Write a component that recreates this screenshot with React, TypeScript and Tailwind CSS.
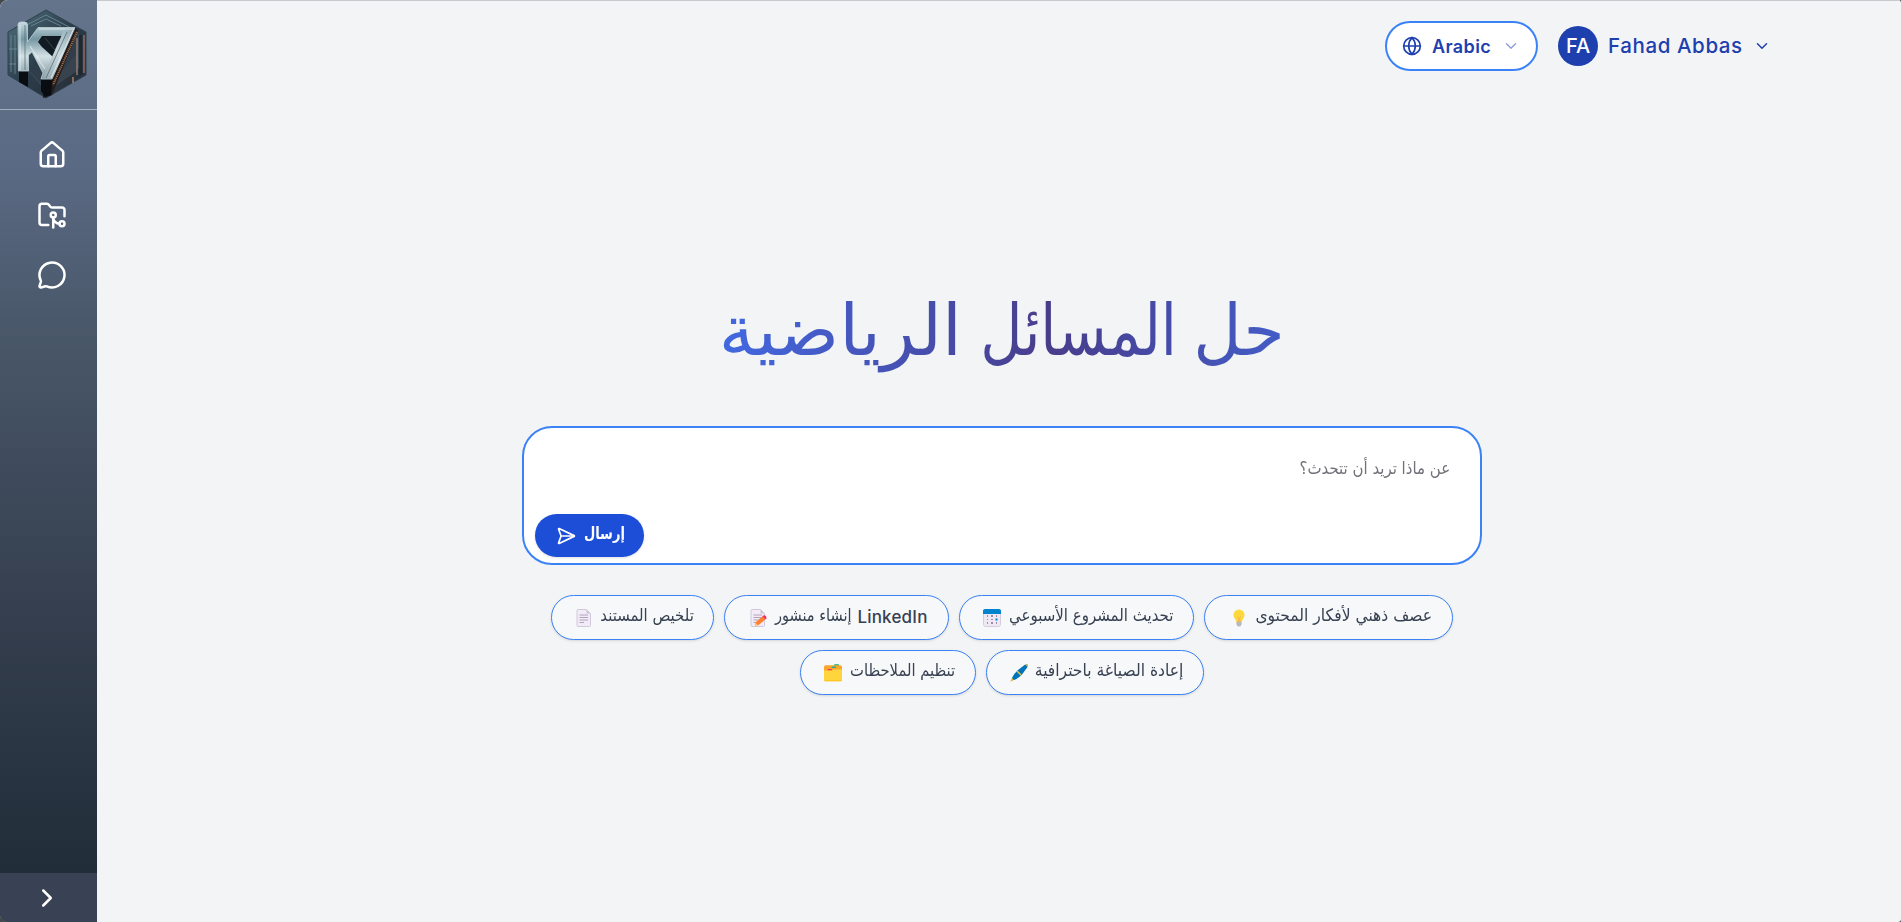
import React from "react";
import { ChevronDown, ChevronRight, FolderGit2, Globe, House, MessageCircle, SendHorizontal } from "lucide-react";

const arabic = "font-['DejaVu_Sans',sans-serif]";

function Logo() {
  return (
    <svg viewBox="0 0 80 90" className="h-[90px] w-[80px]">
      <defs>
        <linearGradient id="hex" x1="0" y1="0" x2="1" y2="1">
          <stop offset="0" stopColor="#50707e" />
          <stop offset=".5" stopColor="#2c3c49" />
          <stop offset="1" stopColor="#252c35" />
        </linearGradient>
        <linearGradient id="steel" x1="0" y1="0" x2="0" y2="1">
          <stop offset="0" stopColor="#c9dde2" />
          <stop offset=".3" stopColor="#7697a3" />
          <stop offset=".6" stopColor="#d3e1e4" />
          <stop offset="1" stopColor="#7d949e" />
        </linearGradient>
        <linearGradient id="seven" x1="1" y1="0" x2="0" y2="1">
          <stop offset="0" stopColor="#8ba6b1" />
          <stop offset=".5" stopColor="#cbd9dd" />
          <stop offset="1" stopColor="#8fa4ac" />
        </linearGradient>
      </defs>
      <path d="M39 1 L79 23 V66 L39 89 L1 66 V23Z" fill="url(#hex)" stroke="#2f424e" strokeWidth="1" />
      <path d="M16 18 L39 6 L64 19 M24 17 L39 10 L54 17 M4 26 V63 M8 26 V65 M2 40 H10 M2 55 H9" fill="none" stroke="#6f909c" strokeWidth=".8" />
      <path d="M22 62 L36 78 L60 68 L72 58 V26 L64 22" fill="#303e4c" stroke="#465763" strokeWidth=".7" />
      <path d="M52 66 L70 44 V62 L44 80Z" fill="#38434e" />
      <path d="M70 29 V66" stroke="#b08b7c" strokeWidth="1.2" />
      <path d="M77 26 V64" stroke="#8d6a60" strokeWidth="1.6" />
      <path d="M73.5 26 V66" stroke="#20272f" strokeWidth="3" />
      <path d="M66 68 V74" stroke="#c58a6c" strokeWidth="1.3" />
      <path d="M68 18 L71 22 L45 86 L36 89 V74Z" fill="#241c1d" />
      <path d="M70 23 L46 76" stroke="#9c6c49" strokeWidth="2" strokeDasharray="1.2 .8" />
      <path d="M12 60 H21 V78 L12 73Z M34 70 L45 71 L44 86 L38 88 L34 82Z" fill="#090d12" />
      <path d="M11 16 Q11 13 14 13 H17.5 Q20.5 13 20.5 16 V33 L31 18.5 H68 L45 70 H34 L36 64 L25 43 L21.5 46 V62 H11.5Z" fill="url(#steel)" stroke="#bfd2d8" strokeWidth=".8" />
      <path d="M35 27 H57 L46 48 L35 38 L31 33Z" fill="#121a22" />
      <path d="M38 29 L48 41 L52 32" fill="none" stroke="#3d4e5a" strokeWidth=".8" />
      <path d="M58 19 H68 L45 70 H35Z" fill="url(#seven)" />
      <path d="M13 16 V61 M67 19 L44 69 M32 20 H66 M23 37 L38 60" fill="none" stroke="#e8f1f3" strokeWidth=".8" />
      <path d="M18 16 V61 M60 23 L39 69" stroke="#54707d" strokeWidth=".8" />
    </svg>
  );
}

function Bulb() {
  return (
    <svg viewBox="0 0 18 18" className="size-[18px] shrink-0">
      <path d="M6.3 11h5.4l-.6 4H6.9z" fill="#f3ad61" />
      <path d="M9 .5a5.5 5.5 0 0 0-5.5 5.5c0 2.8 1.9 4 2.7 6.2h5.6c.8-2.2 2.7-3.4 2.7-6.2A5.5 5.5 0 0 0 9 .5" fill="#ffd83b" />
      <path d="M7 7.5l1.4 1v3.7M11 7.5l-1.4 1v3.7" fill="none" stroke="#f3ad61" strokeWidth=".7" />
      <path d="M6.5 13h5v2.2L10.3 17.5H7.7L6.5 15.2z" fill="#b9b7c0" />
    </svg>
  );
}

function Calendar() {
  return (
    <svg viewBox="0 0 18 18" className="size-[18px] shrink-0">
      <rect x=".5" y=".5" width="17" height="17" rx="2" fill="#efe8f5" stroke="#cdc4d6" strokeWidth=".8" />
      <path d="M0 5V2Q0 0 2 0h14q2 0 2 2v3z" fill="#0084ce" />
      <path d="M4 6h1v2h-1zM8 6h2v2h-2zM13 6h1v2h-1zM4 10h1v1h-1zM8 10h2v1h-2zM4 13h1v2h-1zM8 13h2v2h-2zM13 13h1v2h-1z" fill="#998ea4" />
      <rect x="12.5" y="9.5" width="2" height="2" fill="#0084ce" />
    </svg>
  );
}

function Page({ pencil = false }: { pencil?: boolean }) {
  return (
    <svg viewBox="0 0 18 18" className="size-[18px] shrink-0">
      <path d="M3 .5H11.5L15.5 4.5V16.5Q15.5 17.5 14.5 17.5H3Q2 17.5 2 16.5V1.5Q2 .5 3 .5Z" fill="#f3ebf8" stroke="#cdc4d6" strokeWidth=".9" />
      <path d="M11.5 .5V4.5H15.5Z" fill="#cdc4d6" />
      <path d="M4.5 6H13M4.5 8.5H13M4.5 11H13M4.5 13.5H9" stroke="#a79cb2" strokeWidth=".9" />
      {pencil && (
        <>
          <path d="M6 16.7L7 13 13.2 7.5 16.2 10.5 9.7 16z" fill="#ff822d" />
          <path d="M6 16.7L6.7 14.2 8.5 16z" fill="#ffce7c" />
          <path d="M13.2 7.5L14.5 6.4Q15.5 5.8 16.6 6.8T17.4 9.3L16.2 10.5z" fill="#f8315e" />
        </>
      )}
    </svg>
  );
}

function Pen() {
  return (
    <svg viewBox="0 0 18 18" className="size-[18px] shrink-0">
      <path d="M.3 17.7L2.5 13 5 15.5z" fill="#e9ae35" />
      <path d="M2 14Q3.5 10 8 6L14.5 1Q16.5 0 17.5 .5 18 2 16.8 4L12 10.5Q8 14.8 4 16z" fill="#0074ba" />
      <path d="M7 7L11 11" stroke="#f9c23c" strokeWidth="1.5" />
      <path d="M15.3 .6L17.5 .5 17.3 2.7z" fill="#f9c23c" />
    </svg>
  );
}

function Dividers() {
  return (
    <svg viewBox="0 0 18 18" className="size-[18px] shrink-0">
      <path d="M10 1.2q0-1 1-1h3q1 0 1 1V4h-5z" fill="#00b26b" />
      <path d="M0 3Q0 1.2 1.8 1.2H16.2Q18 1.2 18 3V8H0z" fill="#f9a72c" />
      <path d="M7.5 3.2q0-.7 1-.7h2.5q1 0 1 .7V4H7.5z" fill="#26a9a5" />
      <path d="M3.5 5.7q0-.7 1-.7h2.5q1 0 1 .7V6.5H3.5z" fill="#f8315e" />
      <path d="M0 6.5H8L10 5.5H18V16Q18 17.5 16.5 17.5H1.5Q0 17.5 0 16z" fill="#ffd53e" />
      <path d="M.5 16.5H17.5" stroke="#ffc52c" />
    </svg>
  );
}

type ChipProps = {
  width: string;
  textWidth: string;
  scale: string;
  text: string;
  latin?: string;
  icon: React.ReactNode;
};

function Chip({ width, textWidth, scale, text, latin, icon }: ChipProps) {
  return (
    <button className={`flex h-[45px] items-center gap-[8px] rounded-full border border-[#3b82f6] bg-[#f6f8fa] pr-[19px] text-[#374151] shadow-sm ${width}`}>
      {latin && <span className="-ml-[3px] w-[72px] text-[17px] font-medium tracking-[0.2px] whitespace-nowrap">{latin}</span>}
      <span className={`flex ${textWidth}`}>
        <span className={`mt-[-5px] origin-right text-[17px] leading-[24px] whitespace-nowrap ${scale} ${arabic}`}>{text}</span>
      </span>
      {icon}
    </button>
  );
}

function TitleWord({ text, box, tint }: { text: string; box: string; tint: string }) {
  return (
    <span className={`flex ${box}`}>
      <span className={`shrink-0 origin-right bg-clip-text text-transparent ${tint}`}>{text}</span>
    </span>
  );
}

export default function App() {
  return (
    <div className="bg-[#46474a]">
      <div className="flex h-[922px] w-full overflow-hidden rounded-l-[8px] rounded-r-[3px] bg-[#f3f4f6] font-[Inter,sans-serif]">
        <aside className="flex w-[97px] shrink-0 flex-col bg-[linear-gradient(to_bottom,#64748b_0%,#5b6a84_18%,#4a596b_34%,#374151_63%,#222d3a_94%)] text-white">
          <div className="flex h-[110px] items-start border-b border-[#a3aebf] pt-[9px] pl-[7px]">
            <Logo />
          </div>
          <nav className="flex flex-1 flex-col gap-[30px] pt-[30px] pl-[37px]">
            <House size={30} />
            <FolderGit2 size={30} />
            <MessageCircle size={30} />
          </nav>
          <div className="flex h-[49px] items-center bg-[#394254] pl-[32px]">
            <ChevronRight size={30} />
          </div>
        </aside>

        <main className="flex flex-1 flex-col border-t border-[#c9cacd]">
          <header className="flex h-[90px] items-center justify-end gap-5 pr-[130px] text-[#1e40af]">
            <button className="flex h-[50px] w-[153px] items-center rounded-full border-2 border-[#3b82f6] bg-white pl-[15px]">
              <Globe size={20} />
              <span className="ml-[10px] w-[58px] text-[18px] font-semibold tracking-[0.4px] whitespace-nowrap">Arabic</span>
              <ChevronDown size={18} strokeWidth={1.8} className="ml-[12px] opacity-50" />
            </button>
            <div className="flex items-center">
              <div className="flex size-10 items-center justify-center rounded-full bg-[#1e40af] text-[20px] font-medium text-white">FA</div>
              <span className="ml-[10px] w-[135px] text-[20.5px] font-medium tracking-[0.6px] whitespace-nowrap">Fahad Abbas</span>
              <ChevronDown size={18} className="ml-[10px]" />
            </div>
          </header>

          <section className="flex flex-col items-center pl-[5px]" dir="rtl">
            <h1 className={`mt-[181px] mr-[-4px] flex h-[118px] gap-[23px] text-[71px] leading-[117px] whitespace-nowrap ${arabic}`}>
              <TitleWord text="حل" box="w-[85px]" tint="scale-x-[0.937] bg-linear-to-l from-[#435cc7] to-[#4551b1]" />
              <TitleWord text="المسائل" box="w-[192px]" tint="scale-x-[0.816] bg-linear-to-l from-[#454dab] via-[#483d8b] via-65% to-[#47469d]" />
              <TitleWord text="الرياضية" box="w-[240px]" tint="scale-x-[1.005] bg-linear-to-l from-[#4649a3] to-[#4169e1]" />
            </h1>
            <div className="mt-[36px] flex h-[139px] w-[960px] flex-col justify-between rounded-[30px] border-2 border-[#3b82f6] bg-white">
              <p className={`origin-right scale-x-[0.88] pt-[26px] pr-[34px] text-[17px] leading-[28px] text-[#71717a] ${arabic}`}>عن ماذا تريد أن تتحدث؟</p>
              <button className="mb-[6px] ml-[11px] flex h-[43px] w-[109px] items-center gap-[8px] self-end rounded-full bg-[#1d4ed8] pr-[19px] text-white shadow-sm">
                <span className="flex w-[41px]">
                  <span className={`mt-[-3px] origin-right scale-x-[0.79] text-[16.5px] font-bold whitespace-nowrap ${arabic}`}>إرسال</span>
                </span>
                <SendHorizontal size={20} className="shrink-0" />
              </button>
            </div>
            <div className="mt-[30px] flex w-[920px] flex-wrap justify-center gap-[10px]">
              <Chip width="w-[249px]" textWidth="w-[177px]" scale="scale-x-[0.915]" text="عصف ذهني لأفكار المحتوى" icon={<Bulb />} />
              <Chip width="w-[235px]" textWidth="w-[165px]" scale="scale-x-[0.882]" text="تحديث المشروع الأسبوعي" icon={<Calendar />} />
              <Chip width="w-[225px]" textWidth="w-[77px]" scale="scale-x-[0.855]" text="إنشاء منشور" latin="LinkedIn" icon={<Page pencil />} />
              <Chip width="w-[163px]" textWidth="w-[93px]" scale="scale-x-[0.875]" text="تلخيص المستند" icon={<Page />} />
              <Chip width="w-[218px]" textWidth="w-[148px]" scale="scale-x-[0.915]" text="إعادة الصياغة باحترافية" icon={<Pen />} />
              <Chip width="w-[176px]" textWidth="w-[106px]" scale="scale-x-[0.868]" text="تنظيم الملاحظات" icon={<Dividers />} />
            </div>
          </section>
        </main>
      </div>
    </div>
  );
}
